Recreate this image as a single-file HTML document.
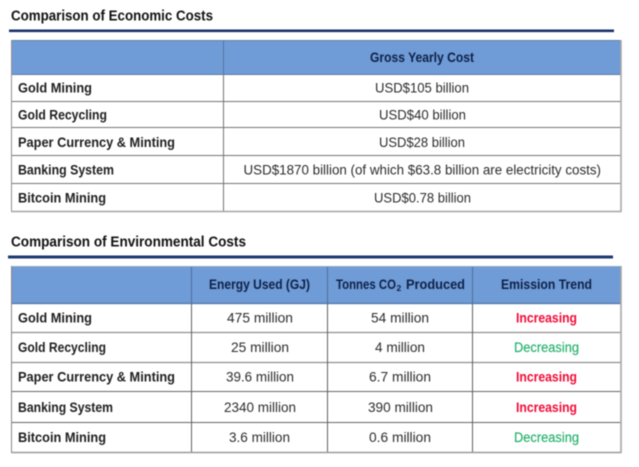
<!DOCTYPE html>
<html>
<head>
<meta charset="utf-8">
<style>
html,body{margin:0;padding:0;background:#fff;width:639px;height:467px;overflow:hidden}
svg{display:block;filter:blur(0.45px)}
text{font-family:"Liberation Sans",sans-serif;font-size:13.5px}
.b{font-weight:bold;fill:#1e1e1e}
.r{fill:#2c2c2c}
.h{font-weight:bold;fill:#0e2148}
.t{font-weight:bold;fill:#111;font-size:14.5px}
.up{font-weight:bold;fill:#f20a35}
.dn{fill:#22b06a;stroke:#22b06a;stroke-width:.15}
</style>
</head>
<body>
<svg width="639" height="467" viewBox="0 0 639 467" xmlns="http://www.w3.org/2000/svg">
<rect width="639" height="467" fill="#fff"/>

<!-- Title 1 -->
<text class="t" x="11" y="20.5" textLength="202" lengthAdjust="spacingAndGlyphs">Comparison of Economic Costs</text>
<rect x="9" y="29.5" width="605" height="2.6" fill="#1a3268"/>

<!-- Table 1 -->
<rect x="11" y="40" width="610" height="34" fill="#6f9bd6"/>
<g fill="none" stroke="#8a8a8a" stroke-width="1">
<path d="M11 101.5H621M11 127.5H621M11 155.5H621M11 183.5H621" stroke="#757575"/>
<path d="M223.5 74V211" stroke="#757575"/>
<path d="M223.5 40V74" stroke="#54769f"/>
<path d="M11 40.5H621" stroke="#5f7fa8"/>
<path d="M11 74.5H621" stroke="#5a79a6"/>
<path d="M11.5 40V211.5" stroke="#8f8f8f"/>
<path d="M11 211.5H621.5" stroke="#a5a5a5" stroke-width="1.5"/>
<path d="M621 40V212" stroke="#a8a8a8" stroke-width="1.6"/>
</g>
<text class="h" x="370" y="62" textLength="104" lengthAdjust="spacingAndGlyphs">Gross Yearly Cost</text>

<text class="b" x="18" y="92.5" textLength="74" lengthAdjust="spacingAndGlyphs">Gold Mining</text>
<text class="b" x="18" y="119.5" textLength="89" lengthAdjust="spacingAndGlyphs">Gold Recycling</text>
<text class="b" x="18" y="147" textLength="157" lengthAdjust="spacingAndGlyphs">Paper Currency &amp; Minting</text>
<text class="b" x="18" y="174.5" textLength="96" lengthAdjust="spacingAndGlyphs">Banking System</text>
<text class="b" x="18" y="202.5" textLength="88" lengthAdjust="spacingAndGlyphs">Bitcoin Mining</text>

<text class="r" x="375" y="92.5" textLength="94" lengthAdjust="spacingAndGlyphs">USD$105 billion</text>
<text class="r" x="379" y="119.5" textLength="87" lengthAdjust="spacingAndGlyphs">USD$40 billion</text>
<text class="r" x="379" y="147" textLength="86" lengthAdjust="spacingAndGlyphs">USD$28 billion</text>
<text class="r" x="243.5" y="174.5" textLength="357.5" lengthAdjust="spacingAndGlyphs">USD$1870 billion (of which $63.8 billion are electricity costs)</text>
<text class="r" x="374" y="202.5" textLength="97" lengthAdjust="spacingAndGlyphs">USD$0.78 billion</text>

<!-- Title 2 -->
<text class="t" x="11" y="246.5" textLength="235" lengthAdjust="spacingAndGlyphs">Comparison of Environmental Costs</text>
<rect x="8" y="255.5" width="605" height="3" fill="#1a3a70"/>

<!-- Table 2 -->
<rect x="11" y="266" width="610" height="37.5" fill="#6f9bd6"/>
<g fill="none" stroke-width="1">
<path d="M11 332.5H621M11 362.5H621" stroke="#8f8f8f" stroke-width="1.2"/>
<path d="M11 391.5H621M11 422.5H621" stroke="#666"/>
<path d="M191.5 303V452M327.5 303V452M472.5 303V452" stroke="#606060"/>
<path d="M191.5 266V303M327.5 266V303M472.5 266V303" stroke="#4f6f9c"/>
<path d="M11 266.5H621" stroke="#8ea6c6"/>
<path d="M11 303.5H621" stroke="#4f72a6" stroke-width="1.2"/>
<path d="M11.5 266V453" stroke="#858585"/>
<path d="M11 452.5H621.5" stroke="#9a9a9a" stroke-width="1.5"/>
<path d="M621 266V453" stroke="#a5a5a5" stroke-width="1.6"/>
</g>

<text class="h" x="209" y="289" textLength="101" lengthAdjust="spacingAndGlyphs">Energy Used (GJ)</text>
<text class="h" x="336" y="289" textLength="60" lengthAdjust="spacingAndGlyphs">Tonnes CO</text>
<text class="h" x="396.5" y="291" style="font-size:8.5px">2</text>
<text class="h" x="406" y="289" textLength="59" lengthAdjust="spacingAndGlyphs">Produced</text>
<text class="h" x="501" y="289" textLength="91" lengthAdjust="spacingAndGlyphs">Emission Trend</text>

<text class="b" x="18" y="322.7" textLength="74" lengthAdjust="spacingAndGlyphs">Gold Mining</text>
<text class="b" x="18" y="352" textLength="88" lengthAdjust="spacingAndGlyphs">Gold Recycling</text>
<text class="b" x="18" y="381.7" textLength="157" lengthAdjust="spacingAndGlyphs">Paper Currency &amp; Minting</text>
<text class="b" x="18" y="412" textLength="95" lengthAdjust="spacingAndGlyphs">Banking System</text>
<text class="b" x="18" y="442" textLength="88" lengthAdjust="spacingAndGlyphs">Bitcoin Mining</text>

<text class="r" x="227" y="322.7" textLength="66" lengthAdjust="spacingAndGlyphs">475 million</text>
<text class="r" x="231" y="352" textLength="58" lengthAdjust="spacingAndGlyphs">25 million</text>
<text class="r" x="226" y="381.7" textLength="68" lengthAdjust="spacingAndGlyphs">39.6 million</text>
<text class="r" x="224" y="412" textLength="72" lengthAdjust="spacingAndGlyphs">2340 million</text>
<text class="r" x="229" y="442" textLength="61" lengthAdjust="spacingAndGlyphs">3.6 million</text>

<text class="r" x="371" y="322.7" textLength="58" lengthAdjust="spacingAndGlyphs">54 million</text>
<text class="r" x="375" y="352" textLength="50" lengthAdjust="spacingAndGlyphs">4 million</text>
<text class="r" x="369" y="381.7" textLength="62" lengthAdjust="spacingAndGlyphs">6.7 million</text>
<text class="r" x="368" y="412" textLength="65" lengthAdjust="spacingAndGlyphs">390 million</text>
<text class="r" x="369" y="442" textLength="62" lengthAdjust="spacingAndGlyphs">0.6 million</text>

<text class="up" x="516" y="322.7" textLength="61" lengthAdjust="spacingAndGlyphs">Increasing</text>
<text class="dn" x="514" y="352" textLength="65" lengthAdjust="spacingAndGlyphs">Decreasing</text>
<text class="up" x="516" y="381.7" textLength="61" lengthAdjust="spacingAndGlyphs">Increasing</text>
<text class="up" x="516" y="412" textLength="61" lengthAdjust="spacingAndGlyphs">Increasing</text>
<text class="dn" x="514" y="442" textLength="65" lengthAdjust="spacingAndGlyphs">Decreasing</text>
</svg>
</body>
</html>
